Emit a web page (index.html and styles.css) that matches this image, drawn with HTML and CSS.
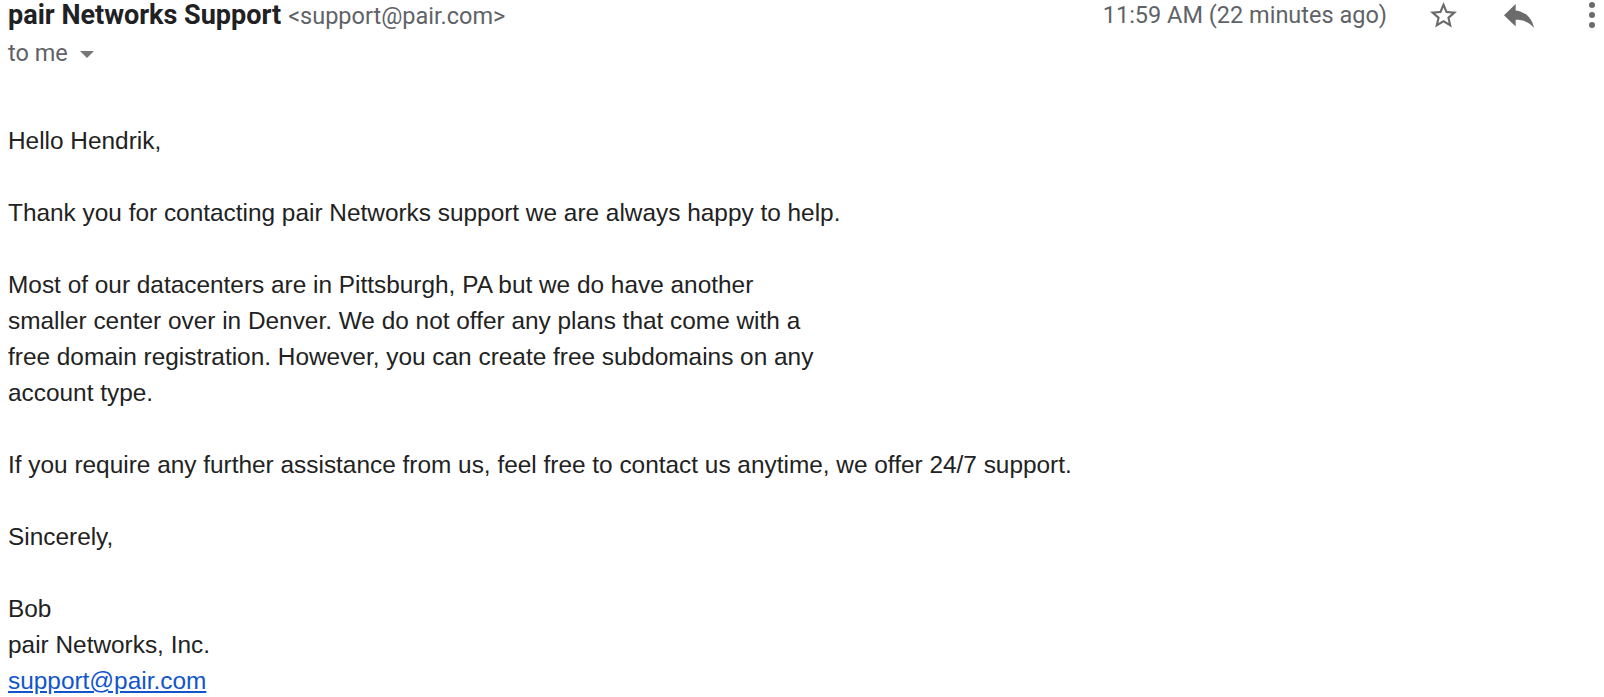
FILE: index.html
```html
<!DOCTYPE html>
<html lang="en">
  <head>
    <meta charset="UTF-8" />
    <title>pair Networks Support</title>
    <link rel="stylesheet" href="styles.css">
  </head>
  <body>
    <div class="message">
      <header class="msgHeader">
        <div class="sender">
          <div class="fromLine">
            <span class="senderName">pair Networks Support</span>
            <span class="senderEmail">&lt;support@pair.com&gt;</span>
          </div>
          <div class="toLine">
            to me <span class="caret"></span>
          </div>
        </div>
        <div class="actions">
          <span class="time">11:59 AM (22 minutes ago)</span>
          <!-- star -->
          <svg class="icon star" width="27" height="26" viewBox="2 2 20 19.3">
            <path d="M22 9.24l-7.19-.62L12 2 9.19 8.63 2 9.24l5.46 4.73L5.82 21 12 17.27 18.18 21l-1.63-7.03L22 9.24zM12 15.4l-3.76 2.27 1-4.28-3.32-2.88 4.38-.38L12 6.1l1.71 4.04 4.38.38-3.32 2.88 1 4.28L12 15.4z" />
          </svg>
          <!-- reply -->
          <svg class="icon reply" width="30" height="24" viewBox="3 5 18 15" preserveAspectRatio="none">
            <path d="M10 9V5l-7 7 7 7v-4.1c5 0 8.5 1.6 11 5.1-1-5-4-10-11-11z" />
          </svg>
          <!-- more -->
          <svg class="icon more" width="8" height="28" viewBox="0 0 8 28">
            <circle cx="4" cy="4" r="3" />
            <circle cx="4" cy="14" r="3" />
            <circle cx="4" cy="24" r="3" />
          </svg>
        </div>
      </header>
      <div class="msgBody">
        Hello Hendrik,<br /><br />
        Thank you for contacting pair Networks support we are always happy to help.<br /><br />
        Most of our datacenters are in Pittsburgh, PA but we do have another<br />
        smaller center over in Denver. We do not offer any plans that come with a<br />
        free domain registration. However, you can create free subdomains on any<br />
        account type.<br /><br />
        If you require any further assistance from us, feel free to contact us anytime, we offer 24/7 support.<br /><br />
        Sincerely,<br /><br />
        Bob<br />
        pair Networks, Inc.<br />
        <a href="mailto:support@pair.com">support@pair.com</a>
      </div>
    </div>
  </body>
</html>
```

FILE: styles.css
```css
body {
  margin: 0;
  background: #fff;
  font-family: Roboto, "Liberation Sans", Arial, sans-serif;
}
.message {
  padding: 0 8px;
}
.msgHeader {
  display: flex;
  justify-content: space-between;
  align-items: flex-start;
}
.fromLine {
  height: 30px;
  line-height: 30px;
}
.senderName {
  font-size: 27px;
  font-weight: 700;
  color: #202124;
}
.senderEmail {
  margin-left: 3px;
  font-size: 23.5px;
  color: #5f6368;
}
.toLine {
  margin-top: 8px;
  height: 30px;
  line-height: 30px;
  font-size: 23.5px;
  color: #5f6368;
}
.caret {
  display: inline-block;
  width: 0;
  height: 0;
  margin-left: 6px;
  vertical-align: middle;
  border-left: 7px solid transparent;
  border-right: 7px solid transparent;
  border-top: 7px solid #777;
}
.actions {
  display: flex;
  align-items: center;
  height: 30px;
}
.time {
  font-size: 23.5px;
  color: #5f6368;
  margin-right: 43px;
}
.icon {
  fill: #6b6b6b;
}
.star {
  margin-right: 47px;
}
.reply {
  margin-right: 54px;
  margin-top: 2px;
}
.more {
  margin-right: 0;
}
.msgBody {
  margin-top: 55px;
  font-family: "Liberation Sans", Arial, Helvetica, sans-serif;
  font-size: 24.4px;
  line-height: 36px;
  color: #222;
}
.msgBody a {
  color: #1155cc;
}
```
